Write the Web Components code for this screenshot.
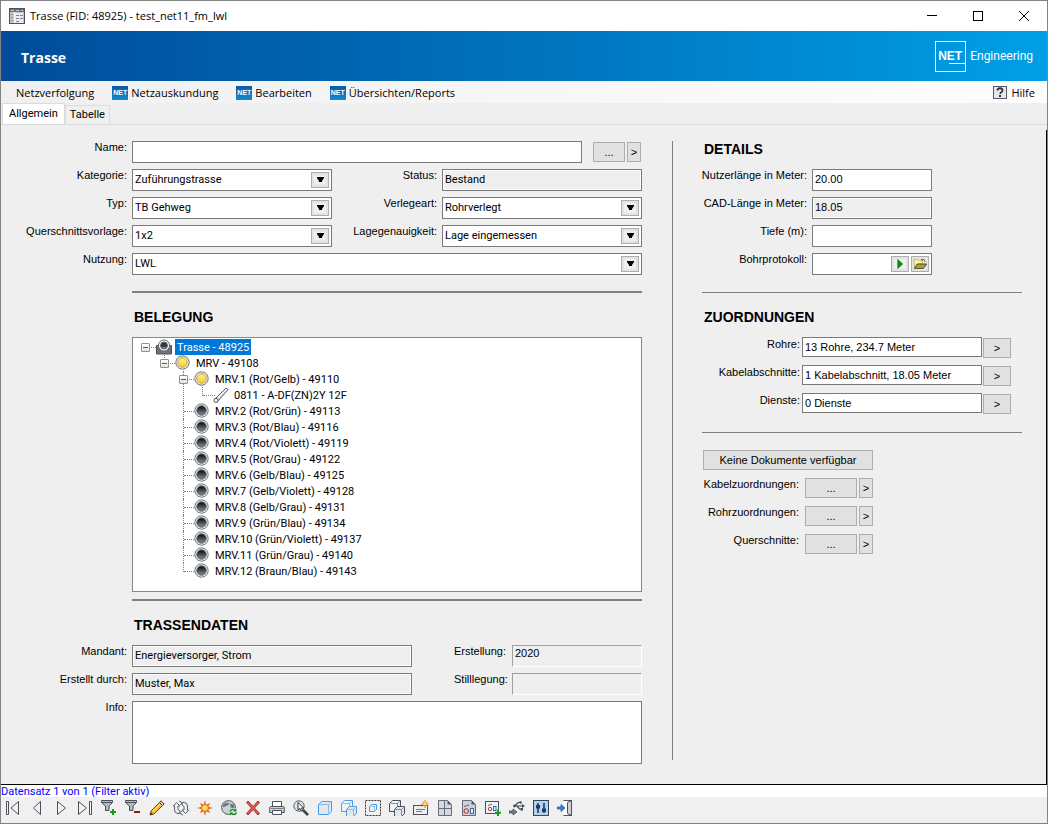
<!DOCTYPE html>
<html lang="de">
<head>
<meta charset="utf-8">
<title>Trasse (FID: 48925) - test_net11_fm_lwl</title>
<style>
  html, body { margin: 0; }
  body {
    font: 11px/12px "Liberation Sans", Arial, sans-serif;
    color: #000;
    background: #efefef;
    --ui-font: "Open Sans", "Segoe UI", sans-serif;
    --value-font: Roboto, "Liberation Sans", sans-serif;
    --rule: #808080;
  }
</style>
</head>
<body>
<app-window></app-window>

<script>
/* ---------- icon set ---------- */
const ring = (name, from, to, edge) => `
  <defs><linearGradient id="${name}" x1="0" y1="0" x2="0" y2="1"><stop offset=".2" stop-color="${from}"/><stop offset="1" stop-color="${to}"/></linearGradient></defs>
  <circle cx="7.500" cy="7.500" r="6.700" fill="#eceef1" stroke="#70747c"/>
  <circle cx="7.500" cy="7.500" r="4.700" fill="url(#${name})" stroke="${edge}"/>`;

const gear = '#4a4f5a';
const cube = (x, y, s, d, c, f = '#eef3f8') => `
  <path d="M${x} ${y + d}l${d} -${d}h${s}v${s}l-${d} ${d}h-${s}z" fill="${f}" stroke="${c}" stroke-linejoin="round"/>
  <path d="M${x + 1} ${y + d}h${s - 1}v${s - 1}M${x + s} ${y + d}l${d - 1} -${d - 1}" fill="none" stroke="${c}" stroke-opacity=".6"/>`;

const ICONS = {
  table: `<rect x=".5" y=".5" width="15" height="15" fill="#c3c6cc" stroke="#4d535e"/><path d="M1 1h14v3H1z" fill="#6b717c"/><path d="M2 2.500h3M7 2.500h3M12 2.500h2" stroke="#c3c6cc"/><path d="M5.500 4v11" stroke="#fff"/><rect x="6" y="5" width="8" height="10" fill="#e9ebee"/><path d="M7 7.500h3M7 10.500h3M7 13.500h3M11 7.500h3M11 10.500h3" stroke="#80858f"/><path d="M2 6.500h2M2 9.500h2M2 12.500h2" stroke="#8e939c"/>`,
  help: `<rect x="1.500" y="1.500" width="13" height="12" fill="#e6e8ec" stroke="#555b66"/><path d="M5.500 5.500c0-3 5-3 5 0 0 1.700-2.300 1.600-2.300 3.500" fill="none" stroke="#333" stroke-width="1.800"/><rect x="7" y="10" width="2" height="2" fill="#333"/>`,
  duct: `<path d="M.5 6.500h3v4h9v-4h3v8.500H.5z" fill="#6c727c" stroke="#4a4f58"/><circle cx="8" cy="6.500" r="5.600" fill="#eceef0" stroke="#666b73"/><circle cx="8" cy="6.500" r="3.400" fill="#34373e" stroke="#555a63"/><path d="M5.500 8a3 3 0 0 0 5 0z" fill="#8b909a"/>`,
  yellow: ring('y', '#ffe873', '#efd044', '#c7a520'),
  dark: ring('d', '#1f2024', '#8a90a0', '#55585f'),
  cable: `<path d="M1.600 12.400L12.800 1.200l2.300 1.300L4.400 14.600z" fill="#dfe2e6" stroke="#555a63"/><path d="M4 12L14 2" stroke="#fff"/><circle cx="3" cy="13.400" r="2" fill="#fff" stroke="#4a4f58"/>`,
  play: `<path d="M5 2v12l6.500-6z" fill="#0a8a0a"/>`,
  folder: `<path d="M1 3h5l1 1h4v4H5l-3 4z" fill="#f8f59a" stroke="#a5a25a" stroke-width=".8"/><path d="M1.500 13l3.500-5h10.500L12 13z" fill="#a8a444" stroke="#3f3f12"/><path d="M9 3h3.500L14 5.500" fill="none" stroke="#3f3f12"/>`,
  first: `<path d="M1.500 1.500h2v13h-2z" fill="#fff" stroke="${gear}"/><path d="M13.500 1.500v13L6 8z" fill="#f0f1f3" stroke="${gear}"/>`,
  prev: `<path d="M11.500 1.500v13L4.500 8z" fill="#f0f1f3" stroke="${gear}"/>`,
  next: `<path d="M4.500 1.500v13L12.500 8z" fill="#f0f1f3" stroke="${gear}"/>`,
  last: `<path d="M12.500 1.500h2v13h-2z" fill="#fff" stroke="${gear}"/><path d="M1.500 1.500v13L9.500 8z" fill="#f0f1f3" stroke="${gear}"/>`,
  filterAdd: `<path d="M.5.500h11v2L8 6v4.500H4.500V6L.5 2.500z" fill="#b5bac2" stroke="${gear}"/><path d="M1 2.500h10" stroke="${gear}"/><path d="M12 9v6M9 12h6" stroke="#14a014" stroke-width="2"/>`,
  filterDel: `<path d="M.5.500h11v2L8 6v4.500H4.500V6L.5 2.500z" fill="#b5bac2" stroke="${gear}"/><path d="M1 2.500h10" stroke="${gear}"/><path d="M9 12h6" stroke="#a01010" stroke-width="2"/>`,
  pencil: `<path d="M1 15l1-4L12 1l3 3L5 14z" fill="#f9b93b" stroke="#7a4b16"/><path d="M3.500 11.500l8-8" stroke="#ffe39a"/><path d="M10.500 2.500L12 .8l3.200 3.200-1.700 1.500z" fill="#d9dbdf" stroke="#6a3232"/><path d="M1 15l.8-3 2.200 2.200z" fill="#333"/>`,
  refresh: `<path d="M6.500 13.500H5A3.500 3.500 0 0 1 1.500 10V6H.3L3.500 2.500 7 6H5v3.500l2 1.500zM9.500 2.500H11A3.500 3.500 0 0 1 14.500 6v4h1.200L12.500 13.500 9 10h2V6.500L9 5z" fill="#eceef0" stroke="#5b606a" stroke-linejoin="round"/><path d="M6 .8L9.500 3 6.500 5.500M10 15.200L6.500 13l3-2.500" fill="#eceef0" stroke="#5b606a"/>`,
  star: `<path d="M8 0l1.200 4.700L13 3l-1.700 3.800L16 8l-4.700 1.200L13 13l-3.800-1.700L8 16l-1.200-4.700L3 13l1.700-3.800L0 8l4.700-1.200L3 3l3.800 1.700z" fill="#e8641b"/><circle cx="8" cy="8" r="2.800" fill="#ffe25a"/>`,
  globe: `<circle cx="7.500" cy="7.500" r="6.900" fill="#ccd3d5" stroke="#4f5c61"/><path d="M2 5c2-3 5-3 6-2s-2 3-3 3-2 2-3 1zM9 3.500l4 1 .5 4-4-1z" fill="#6c7c81"/><path d="M9.500 8.500H16V16H9.500z" fill="#efefef" fill-opacity=".8"/><path d="M9 11.500c1-2.500 4-2.500 5-.5M15.500 12.500c-1 2.500-4 2.500-5.500.5" fill="none" stroke="#178a2c" stroke-width="1.500"/><path d="M15.500 8.500v3h-3zM9 15.500v-3h3z" fill="#178a2c"/>`,
  del: `<path d="M1.500 2.500L3 1l5 5.500L13 1l1.500 1.500L9.500 8l5 5.500L13 15 8 9.500 3 15l-1.500-1.500 5-5.500z" fill="#e35a5a" stroke="#a03030" stroke-linejoin="round"/>`,
  print: `<path d="M3.500 6.500v-5h9v5" fill="#fff" stroke="${gear}"/><path d="M.7 8c0-1 .5-1.500 1.500-1.500h11.600c1 0 1.500.5 1.500 1.500v4.500H.7z" fill="#cfd2d8" stroke="${gear}" stroke-linejoin="round"/><path d="M3.500 10.500h9v4h-9z" fill="#fff" stroke="${gear}"/><path d="M2 8.500h12" stroke="#777d88"/>`,
  find: `<circle cx="6" cy="6" r="5.200" fill="#dbe6ea" stroke="#5d666d"/><path d="M10 10l5 5" stroke="#3f444c" stroke-width="2.600"/><path d="M5 2.500v7.500l2-1.600 1.200 2.800 1.500-.7L8.500 8h2.300z" fill="#fff" stroke="#222" stroke-width=".9"/>`,
  cube: cube(1.500, 1.500, 10, 3, '#4a9be8', '#e3e6ea'),
  cubes: cube(.500, .500, 8, 3, '#4a9be8') + cube(5.500, 6.500, 7, 3, '#4a9be8', '#e3e6ea'),
  select: `<rect x=".5" y=".5" width="15" height="15" fill="none" stroke="#333" stroke-dasharray="2 1"/>` + cube(4.500, 4.500, 5, 2, '#4a9be8'),
  cubesGrey: cube(.500, .500, 8, 3, gear) + cube(5.500, 6.500, 7, 3, gear, '#e3e6ea'),
  card: `<rect x=".5" y="5.500" width="14" height="9" fill="#eceef1" stroke="${gear}"/><path d="M3 9.500h9M3 11.500h6" stroke="#777d88"/><path d="M12 0v8M8 4h8M9.500 1.500l5 5M14.500 1.500l-5 5" stroke="#ee7d1d"/><circle cx="12" cy="4" r="1.400" fill="#ffe25a"/>`,
  sheet: `<path d="M1.500.500h9l4 4v11h-13z" fill="#d5d8dd" stroke="#666b75"/><path d="M7.500 1v14M2 8.500h12" fill="none" stroke="#666c77"/><path d="M10.500.500v4h4z" fill="#555a64"/>`,
  report: `<path d="M1.500.500h9l4 4v11h-13z" fill="#cdd0d5" stroke="#666b75"/><path d="M10.500.500v4h4z" fill="#555a64"/><path d="M3 6.500l5-1.500" stroke="#666"/><circle cx="5.300" cy="11" r="2.300" fill="none" stroke="#c13030"/><rect x="9.500" y="8.500" width="3" height="5" fill="#e8eefa" stroke="#2a71c4"/>`,
  reportAdd: `<rect x=".5" y="1.500" width="13" height="12" fill="#f1f2f4" stroke="${gear}"/><path d="M3 5.500l4-1.500" stroke="#666"/><circle cx="5" cy="9" r="1.700" fill="none" stroke="#c13030"/><rect x="8.500" y="6.500" width="2.500" height="4" fill="none" stroke="#2a71c4"/><path d="M13 9.500v6.500M10 12.700h6" stroke="#14a014" stroke-width="2"/>`,
  usb: `<path d="M5 6h8M6 6l3-3.500h2M8 6l2.500 3h2" fill="none" stroke="#444a54" stroke-width="1.200"/><path d="M13 4l3 2-3 2z" fill="#444a54"/><circle cx="11.500" cy="2.500" r="1.300" fill="#444a54"/><rect x="11.500" y="8" width="2.500" height="2.500" fill="#444a54"/><circle cx="5.500" cy="6" r="1.400" fill="#444a54"/><path d="M0 11h4V9l4 3-4 3v-2H0z" fill="#777d87" stroke="#444a54" stroke-width=".8"/>`,
  sliders: `<rect x=".5" y=".5" width="15" height="15" fill="#b9d0ea" stroke="#30455f"/><path d="M5 3v10M11 3v10" stroke="#123c73" stroke-width="1.600"/><path d="M3 5h4v3.500H3zM9 8.500h4V12H9z" fill="#123c73"/>`,
  exit: `<path d="M6.500.500h8v15h-8" fill="#fff" stroke="${gear}"/><path d="M10.500 2.500l4-2v15l-4-2z" fill="#cfd2d7" stroke="${gear}"/><path d="M0 7h4V4.500L8 8l-4 3.500V9H0z" fill="#2f86d8" stroke="#195a9c" stroke-width=".7"/>`,
};

const icon = (name) =>
  `<svg class="icon" width="16" height="16" viewBox="0 0 16 16" aria-hidden="true">${ICONS[name]}</svg>`;

const define = (name, render) => customElements.define(name, class extends HTMLElement {
  constructor() {
    super();
    this.attachShadow({ mode: 'open' });
  }
  connectedCallback() {
    if (this.shadowRoot.childNodes.length) return;
    const template = document.createElement('template');
    template.innerHTML = render(this);
    this.shadowRoot.append(template.content.cloneNode(true));
  }
});

/* ---------- window chrome ---------- */
define('title-bar', () => `
  <style>
    :host { display: flex; align-items: center; height: 30px; padding-left: 8px; background: #fff; font: 11px/16px var(--ui-font); }
    .icon { margin-right: 5px; }
    h1 { flex: 1; margin: 0; font: inherit; }
    button { width: 46px; height: 30px; padding: 0; border: 0; background: none; display: grid; place-items: center; }
    button svg { fill: none; stroke: #000; }
  </style>
  ${icon('table')}
  <h1><slot></slot></h1>
  <button type="button" aria-label="Minimieren"><svg width="10" height="10"><path d="M0 4.500h10"/></svg></button>
  <button type="button" aria-label="Maximieren"><svg width="10" height="10"><rect x=".5" y=".5" width="9" height="9"/></svg></button>
  <button type="button" aria-label="Schließen"><svg width="10" height="10"><path d="M0 0l10 10M10 0L0 10"/></svg></button>
`);

define('page-banner', () => `
  <style>
    :host { display: flex; align-items: center; justify-content: space-between; height: 50px; padding: 0 14px 0 20px;
            color: #fff; background: linear-gradient(90deg, #004c9a, #0072bc 50%, #00a0e6); }
    h2 { margin: 3px 0 0; font: bold 14px/18px var(--ui-font); }
    .logo { display: flex; align-items: center; gap: 4px; font: 12px/16px Roboto, sans-serif; }
    .box { box-sizing: border-box; width: 31px; height: 31px; padding: 8px 0 0 2px; border: 1px solid #fff; }
    .net { display: block; font: bold 12px/13px "Liberation Sans", sans-serif; }
    .net::after { content: ""; display: block; width: 16px; margin-left: 11px; border-top: 1px solid #fff; }
  </style>
  <h2><slot></slot></h2>
  <div class="logo"><span class="box"><span class="net">NET</span></span><span>Engineering</span></div>
`);

define('menu-entry', (el) => `
  <style>
    :host { display: flex; }
    button { display: flex; align-items: center; gap: 3px; padding: 0; border: 0; background: none; color: inherit; font: inherit; }
    .net { width: 16px; height: 14px; color: #fff; background: linear-gradient(#0b5aa6, #1589d3);
           font: bold 7px/13px "Liberation Sans", sans-serif; text-align: center; }
  </style>
  <button type="button">${{ net: '<span class="net">NET</span>', help: icon('help') }[el.getAttribute('icon')] || ''}<slot></slot></button>
`);

define('menu-bar', () => `
  <style>
    :host { display: flex; gap: 18px; box-sizing: border-box; height: 22px; padding: 2px 12px 0 15px;
            background: linear-gradient(90deg, #f0f0f0, #fdfdfd); font: 11px/18px var(--ui-font); }
    .help { margin-left: auto; }
  </style>
  <menu-entry>Netzverfolgung</menu-entry>
  <menu-entry icon="net">Netzauskundung</menu-entry>
  <menu-entry icon="net">Bearbeiten</menu-entry>
  <menu-entry icon="net">Übersichten/Reports</menu-entry>
  <menu-entry class="help" icon="help">Hilfe</menu-entry>
`);

define('tab-strip', () => `
  <style>
    :host { display: flex; align-items: flex-end; height: 21px; padding-left: 1px; border-bottom: 1px solid #dcdcdc; }
    button { box-sizing: border-box; height: 19px; padding: 0 4px; border: 1px solid #dcdcdc; border-bottom: 0; background: #f0f0f0;
             font: 11px/16px var(--value-font); color: #000; }
    .active { height: 21px; padding: 0 6px 1px; background: #fff; }
  </style>
  <button type="button" class="active">Allgemein</button>
  <button type="button">Tabelle</button>
`);

/* ---------- form controls ---------- */
define('push-button', () => `
  <style>
    :host { display: block; height: 20px; }
    button { box-sizing: border-box; width: 100%; height: 100%; padding: 0; border: 1px solid #adadad; background: #e1e1e1;
             color: #000; font: inherit; display: block; text-align: center; }
  </style>
  <button type="button"><slot></slot></button>
`);

/* label + control; kind = text | readonly | sunken | select | file | area */
define('form-field', (el) => {
  const kind = el.getAttribute('kind') || 'text';
  const value = el.getAttribute('value') || '';
  const control = {
    select: `<select id="c"><option>${value}</option></select><span class="drop" aria-hidden="true"><svg width="7" height="6"><path d="M0 0h7v1L5 4v1H2V4L0 1z"/></svg></span>`,
    area: `<textarea id="c">${value}</textarea>`,
    file: `<input id="c" type="text" value="${value}"><span class="tools">
             <button type="button" aria-label="Anzeigen">${icon('play')}</button>
             <button type="button" aria-label="Öffnen">${icon('folder')}</button></span>`,
  }[kind] || `<input id="c" type="text" value="${value}"${kind === 'text' ? '' : ' readonly'}>`;
  return `
  <style>
    :host { display: grid; grid-template-columns: var(--label, 105px) minmax(0, 1fr); column-gap: var(--label-gap, 5px); }
    label { display: flex; justify-content: var(--label-align, flex-end); white-space: nowrap; line-height: var(--label-line, 12px); }
    .control { position: relative; display: flex; }
    input, select, textarea {
      box-sizing: border-box; width: 100%; height: var(--row, 22px); margin: 0; padding: 0 2px 2px; border: 1px solid #7a7a7a; border-radius: 0;
      background: #fff; color: #000; font-family: inherit; font-size: 11px; line-height: 14px; outline: 0; appearance: none; }
    select { padding-bottom: 0; }
    :host([narrow]) .control { font-family: var(--value-font); }
    :host([plain]) input { padding-bottom: 0; }
    textarea { height: 63px; resize: none; display: block; }
    .readonly input { background: #efefef; box-shadow: inset 0 0 0 1px #fff; }
    .sunken input { background: #efefef; border-color: #a0a0a0 #fff #fff #a0a0a0; padding-bottom: 6px; }
    .drop, .tools { position: absolute; right: 3px; top: 3px; display: flex; gap: 2px; }
    .drop, .tools button { box-sizing: border-box; width: 18px; height: 16px; padding: 0; border: 1px solid #adadad; background: #efefef;
      box-shadow: inset 0 0 0 2px #e3e3e3; display: grid; place-items: center; }
    .drop { pointer-events: none; }
    .tools svg { display: block; width: 14px; height: 14px; }
  </style>
  <label for="c">${el.getAttribute('label')}</label>
  <span class="control ${kind}">${control}</span>`;
});

/* caption followed by an edit and a jump button */
define('link-row', (el) => `
  <style>
    :host { display: grid; grid-template-columns: 97px 52px 14px; justify-content: start; }
    .caption { display: flex; justify-content: flex-end; white-space: nowrap; }
    .more { margin: 0 -6px 0 6px; }
    .jump { margin: 0 -8px 0 8px; }
  </style>
  <span class="caption">${el.getAttribute('label')}</span>
  <push-button class="more">...</push-button>
  <push-button class="jump">&gt;</push-button>
`);

define('section-title', () => `
  <style>
    :host { display: block; }
    h3 { margin: 0 0 12px; padding-left: 2px; font: bold 14px/16px "Liberation Sans", Arial, sans-serif; }
  </style>
  <h3><slot></slot></h3>
`);

/* ---------- tree ---------- */
define('tree-node', (el) => `
  <style>
    :host { display: block; position: relative; }
    .row { position: relative; display: flex; align-items: center; height: 16px; white-space: nowrap; }
    .row::before { content: ""; position: absolute; left: 5px; top: 8px; width: 12px; border-top: 1px dotted #808080; }
    :host(:not([root]))::before { content: ""; position: absolute; left: 4px; top: 0; bottom: 0; border-left: 1px dotted #808080; }
    :host(:not([root]):last-child)::before { bottom: auto; height: 9px; }
    .toggle { position: relative; width: 9px; height: 9px; margin-right: 6px; flex: none; }
    button { display: block; width: 9px; height: 9px; padding: 0; border: 1px solid #919191; border-radius: 1px; background: linear-gradient(#fff, #e4e4e4); }
    button::after { content: ""; display: block; width: 5px; margin: 0 auto; border-top: 1px solid #3a56a8; }
    .icon { position: relative; flex: none; margin-right: 3px; }
    .text { padding: 1px 2px 0; line-height: 15px; }
    :host([selected]) .row .text { color: #fff; background: #0078d7; }
    .children { margin-left: 19px; }
  </style>
  <div class="row">
    <span class="toggle">${el.children.length ? '<button type="button" aria-label="Zuklappen"></button>' : ''}</span>
    ${icon(el.getAttribute('icon'))}
    <span class="text">${el.getAttribute('label')}</span>
  </div>
  <div class="children"><slot></slot></div>
`);

define('duct-tree', () => {
  const pairs = ['Rot/Grün', 'Rot/Blau', 'Rot/Violett', 'Rot/Grau', 'Gelb/Blau', 'Gelb/Violett', 'Gelb/Grau',
                 'Grün/Blau', 'Grün/Violett', 'Grün/Grau', 'Braun/Blau'];
  const rest = pairs.map((pair, i) =>
    `<tree-node icon="dark" label="MRV.${i + 2} (${pair}) - ${49113 + i * 3}"></tree-node>`).join('');
  return `
  <style>
    :host { display: block; box-sizing: border-box; min-height: 255px; padding: 1px 8px 12px; border: 1px solid #828790; background: #fff;
            font-family: var(--value-font); }
  </style>
  <tree-node root selected icon="duct" label="Trasse - 48925"><tree-node icon="yellow" label="MRV - 49108"><tree-node
    icon="yellow" label="MRV.1 (Rot/Gelb) - 49110"><tree-node icon="cable" label="0811 - A-DF(ZN)2Y 12F"></tree-node></tree-node>${rest}</tree-node></tree-node>`;
});

/* ---------- panels ---------- */
define('route-form', () => `
  <style>
    :host { display: block; }
    .rows { display: grid; gap: 6px; }
    .rows form-field { --label: 122px; }
    .pair { display: flex; }
    .pair form-field { flex: 1 1 127px; }
    .pair form-field + form-field { flex-basis: 110px; --label: 105px; }
    .name { display: grid; grid-template-columns: minmax(0, 1fr) 32px 14px; column-gap: 2px; align-items: center; padding-right: 1px; }
    .name form-field { margin-right: 9px; }
    .data { display: grid; grid-template-columns: minmax(0, 1fr) 188px; column-gap: 42px; }
    .data form-field + form-field { --label: 53px; --label-align: flex-start; }
    .indent { margin-left: 127px; }
    hr { height: 2px; margin: 16px 0 16px 127px; border: 0; background: var(--rule); }
    .tight { margin-top: 7px; }
  </style>
  <div class="rows">
    <div class="name"><form-field label="Name:"></form-field><push-button>...</push-button><push-button>&gt;</push-button></div>
    <div class="pair"><form-field narrow kind="select" label="Kategorie:" value="Zuführungstrasse"></form-field><form-field narrow kind="readonly" label="Status:" value="Bestand"></form-field></div>
    <div class="pair"><form-field narrow kind="select" label="Typ:" value="TB Gehweg"></form-field><form-field narrow kind="select" label="Verlegeart:" value="Rohrverlegt"></form-field></div>
    <div class="pair"><form-field narrow kind="select" label="Querschnittsvorlage:" value="1x2"></form-field><form-field narrow kind="select" label="Lagegenauigkeit:" value="Lage eingemessen"></form-field></div>
    <form-field narrow kind="select" label="Nutzung:" value="LWL"></form-field>
  </div>
  <hr>
  <section-title class="indent">BELEGUNG</section-title>
  <duct-tree class="indent"></duct-tree>
  <hr class="tight">
  <section-title class="indent">TRASSENDATEN</section-title>
  <div class="rows">
    <div class="data"><form-field narrow kind="readonly" label="Mandant:" value="Energieversorger, Strom"></form-field><form-field kind="sunken" label="Erstellung:" value="2020"></form-field></div>
    <div class="data"><form-field narrow kind="readonly" label="Erstellt durch:" value="Muster, Max"></form-field><form-field kind="sunken" label="Stilllegung:"></form-field></div>
    <form-field kind="area" label="Info:"></form-field>
  </div>
`);

define('detail-panel', () => `
  <style>
    :host { display: block; }
    .rows { display: grid; gap: 6px; padding-right: 90px; }
    .links, .docs { display: grid; }
    .links { gap: 7px; --label: 98px; --label-gap: 2px; --label-line: 14px; --row: 20px; }
    .links div { display: grid; grid-template-columns: minmax(0, 1fr) 28px; column-gap: 1px; align-items: end; height: 21px; padding-right: 11px; }
    .links form-field { align-self: start; }
    .docs { gap: 8px; }
    .wide { width: 170px; margin-left: 1px; }
    hr { height: 1px; margin: 17px 0 16px; border: 0; background: var(--rule); }
    .lower { margin: 18px 0 17px; }
  </style>
  <section-title>DETAILS</section-title>
  <div class="rows">
    <form-field label="Nutzerlänge in Meter:" value="20.00"></form-field>
    <form-field kind="readonly" label="CAD-Länge in Meter:" value="18.05"></form-field>
    <form-field label="Tiefe (m):"></form-field>
    <form-field kind="file" label="Bohrprotokoll:"></form-field>
  </div>
  <hr>
  <section-title>ZUORDNUNGEN</section-title>
  <div class="links">
    <div><form-field plain label="Rohre:" value="13 Rohre, 234.7 Meter"></form-field><push-button>&gt;</push-button></div>
    <div><form-field plain label="Kabelabschnitte:" value="1 Kabelabschnitt, 18.05 Meter"></form-field><push-button>&gt;</push-button></div>
    <div><form-field plain label="Dienste:" value="0 Dienste"></form-field><push-button>&gt;</push-button></div>
  </div>
  <hr class="lower">
  <div class="docs">
    <push-button class="wide">Keine Dokumente verfügbar</push-button>
    <link-row label="Kabelzuordnungen:"></link-row>
    <link-row label="Rohrzuordnungen:"></link-row>
    <link-row label="Querschnitte:"></link-row>
  </div>
`);

define('status-line', () => `
  <style>:host { display: block; background: #fff; color: #00f; font-family: var(--value-font); line-height: 13px; height: 12px; }</style>
  <slot></slot>
`);

define('tool-bar', () => {
  const tools = [['first', 'Erster'], ['prev', 'Zurück'], ['next', 'Weiter'], ['last', 'Letzter'], ['filterAdd', 'Filter setzen'],
    ['filterDel', 'Filter entfernen'], ['pencil', 'Bearbeiten'], ['refresh', 'Aktualisieren'], ['star', 'Neu'], ['globe', 'Geometrie'],
    ['del', 'Löschen'], ['print', 'Drucken'], ['find', 'Suchen'], ['cube', 'Objekt'], ['cubes', 'Objekte'], ['select', 'Auswahl'],
    ['cubesGrey', 'Gruppe'], ['card', 'Karte'], ['sheet', 'Blatt'], ['report', 'Bericht'], ['reportAdd', 'Bericht anlegen'],
    ['usb', 'Verbindung'], ['sliders', 'Einstellungen'], ['exit', 'Beenden']];
  return `
  <style>
    :host { display: flex; gap: 8px; padding: 3px 4px 7px; background: #f0f0f0; }
    button { width: 16px; height: 16px; padding: 0; border: 0; background: none; flex: none; }
    svg { display: block; }
  </style>
  ${tools.map(([name, text]) => `<button type="button" aria-label="${text}">${icon(name)}</button>`).join('')}`;
});

define('app-window', () => `
  <style>
    :host { box-sizing: border-box; display: flex; flex-direction: column; min-height: 100vh; border: 1px solid #838383; background: #efefef; }
    main { flex: 1; display: flex; margin-top: 5px; padding: 11px 24px 20px 4px; border: solid #000; border-width: 0 1px 1px 0; }
    route-form { flex: 1; min-width: 0; }
    .divider { flex: none; width: 1px; margin: 0 29px 4px 30px; background: var(--rule); }
    detail-panel { flex: none; width: 320px; }
  </style>
  <title-bar>Trasse (FID: 48925) - test_net11_fm_lwl</title-bar>
  <page-banner>Trasse</page-banner>
  <menu-bar></menu-bar>
  <tab-strip></tab-strip>
  <main>
    <route-form></route-form>
    <div class="divider"></div>
    <detail-panel></detail-panel>
  </main>
  <status-line>Datensatz 1 von 1 (Filter aktiv)</status-line>
  <tool-bar></tool-bar>
`);
</script>
</body>
</html>
